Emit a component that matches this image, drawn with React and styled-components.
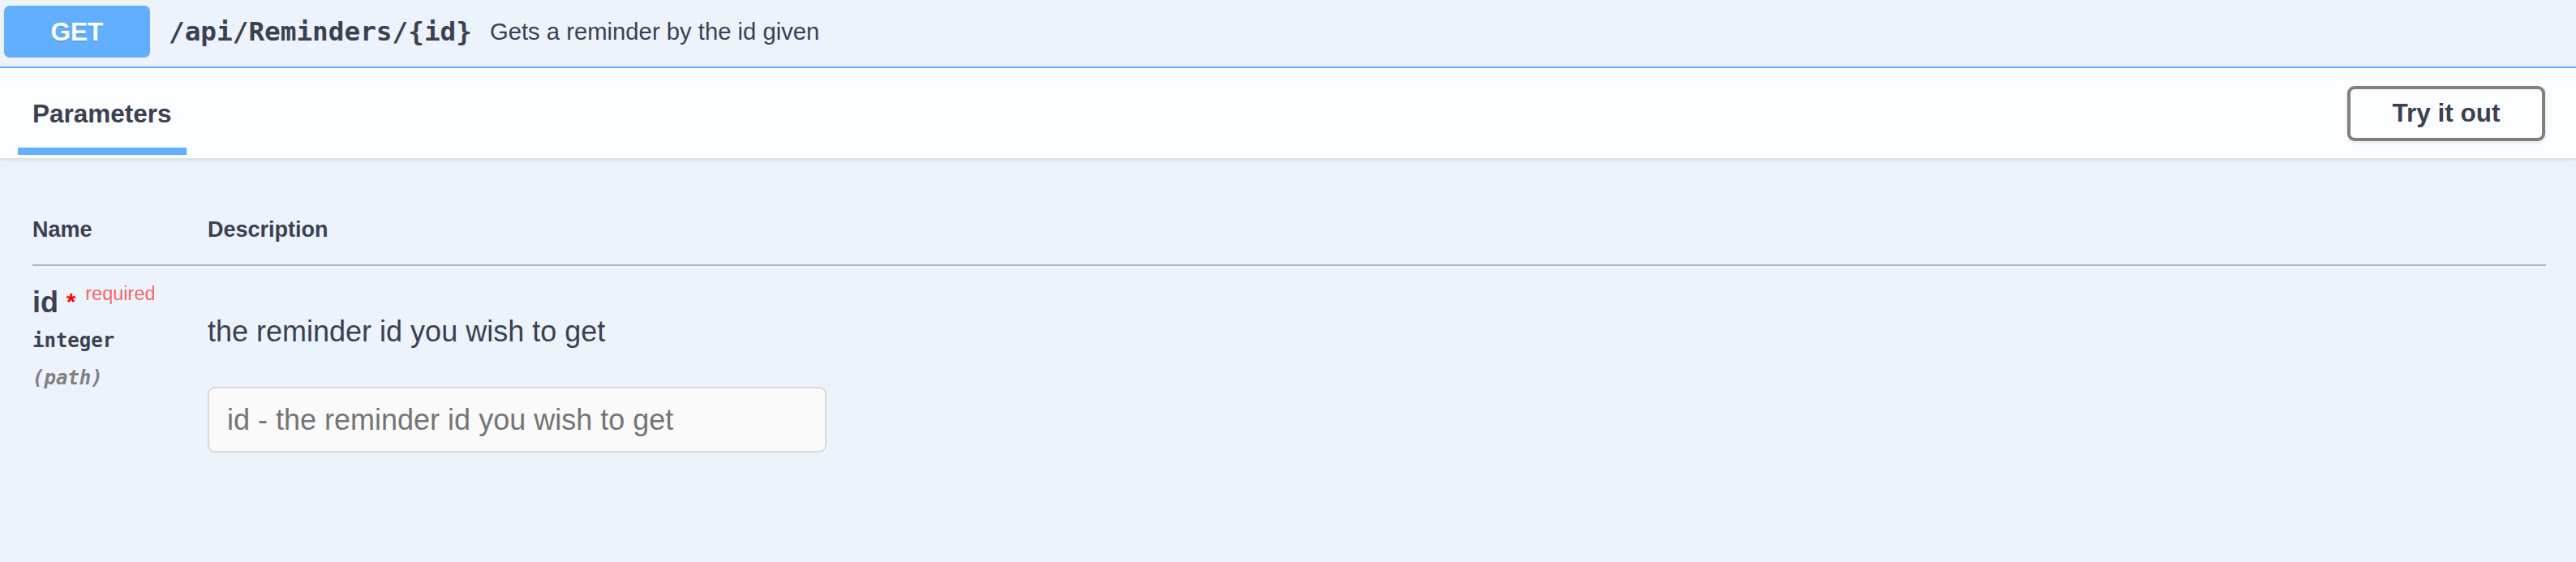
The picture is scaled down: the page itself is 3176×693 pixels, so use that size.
import React from "react";
import styled, { createGlobalStyle } from "styled-components";

const GlobalStyle = createGlobalStyle`
  html, body {
    margin: 0;
    padding: 0;
    background: #ecf3fb;
  }
  body {
    font-family: "Liberation Sans", Arial, sans-serif;
    color: #3b4151;
  }
`;

const Block = styled.div`
  min-height: 100vh;
  background: #ecf3fb;
  display: flex;
  flex-direction: column;
`;

const Summary = styled.div`
  display: flex;
  align-items: center;
  height: 84px;
  box-sizing: border-box;
  padding: 8px 5px 12px;
  border-bottom: 2px solid #61affe;
`;

const Method = styled.span`
  display: flex;
  align-items: center;
  justify-content: center;
  width: 180px;
  height: 64px;
  border-radius: 7px;
  background: #61affe;
  color: #fff;
  font-size: 31.5px;
  font-weight: 700;
  text-shadow: 0 2px 0 rgba(0, 0, 0, 0.1);
`;

const Path = styled.span`
  padding: 0 22px 0 23px;
  font-family: "DejaVu Sans Mono", "Liberation Mono", monospace;
  font-size: 32.7px;
  font-weight: 700;
  color: #3b4151;
`;

const SummaryDesc = styled.span`
  font-size: 29.25px;
  color: #3b4151;
`;

const SectionHeader = styled.div`
  display: flex;
  align-items: stretch;
  justify-content: space-between;
  height: 111px;
  box-sizing: border-box;
  padding: 0 38px 0 22px;
  background: rgba(255, 255, 255, 0.8);
  box-shadow: 0 2px 4px rgba(0, 0, 0, 0.1);
  position: relative;
`;

const Tab = styled.div`
  display: flex;
  flex-direction: column;
  justify-content: flex-end;
  padding-bottom: 4.5px;
`;

const TabLabel = styled.span`
  padding: 0 18px;
  font-size: 31.5px;
  line-height: 36px;
  font-weight: 700;
  color: #3b4151;
`;

const TabLine = styled.span`
  display: block;
  height: 9px;
  margin-top: 24px;
  background: ${(p) => p.$color};
`;

const TryButton = styled.button`
  align-self: center;
  width: 244px;
  height: 68px;
  border: 4px solid #808080;
  border-radius: 9px;
  background: transparent;
  box-shadow: 0 2px 4px rgba(0, 0, 0, 0.1);
  font-family: "Liberation Sans", Arial, sans-serif;
  font-size: 31.5px;
  font-weight: 700;
  color: #3b4151;
  cursor: pointer;
`;

const Body = styled.div`
  padding: 45.5px 37px 0 40px;
`;

const Table = styled.table`
  width: 100%;
  border-collapse: collapse;
  table-layout: fixed;
`;

const Th = styled.th`
  text-align: left;
  padding: 27px 0 27.5px;
  font-size: 27px;
  line-height: 31px;
  font-weight: 700;
  color: #3b4151;
  border-bottom: 2px solid rgba(59, 65, 81, 0.2);
`;

const Td = styled.td`
  vertical-align: top;
  padding: 24px 0 0;
`;

const ParamName = styled.div`
  font-size: 36px;
  line-height: 41px;
  font-weight: 700;
  color: #3b4151;
  white-space: nowrap;
`;

const Star = styled.span`
  margin-left: 10px;
  font-size: 29px;
  line-height: 20px;
  font-weight: 700;
  color: #ff0000;
  vertical-align: 3px;
`;

const Required = styled.span`
  margin-left: 12px;
  font-size: 23.5px;
  line-height: 20px;
  font-weight: 400;
  color: rgba(255, 0, 0, 0.6);
  vertical-align: 15px;
`;

const ParamType = styled.div`
  padding: 13px 0 11px;
  font-family: "DejaVu Sans Mono", "Liberation Mono", monospace;
  font-size: 24px;
  line-height: 28px;
  font-weight: 700;
  color: #3b4151;
`;

const ParamIn = styled.div`
  margin-top: 7px;
  font-family: "DejaVu Sans Mono", "Liberation Mono", monospace;
  font-size: 24px;
  line-height: 28px;
  font-weight: 700;
  font-style: italic;
  color: #808080;
`;

const DescText = styled.p`
  margin: 36px 0 0;
  font-size: 36px;
  line-height: 41px;
  color: #3b4151;
`;

const Input = styled.input`
  display: block;
  width: 763px;
  height: 81px;
  box-sizing: border-box;
  margin: 48px 0 11px;
  padding: 18px 22px;
  border: 2px solid #d9d9d9;
  border-radius: 9px;
  background: #fafafa;
  font-family: "Liberation Sans", Arial, sans-serif;
  font-size: 36px;
  color: #3b4151;
  outline: none;
  &::placeholder {
    color: #757575;
  }
`;

export default function App() {
  return (
    <>
      <GlobalStyle />
      <Block>
        <Summary>
          <Method>GET</Method>
          <Path>/api/Reminders/{"{id}"}</Path>
          <SummaryDesc>Gets a reminder by the id given</SummaryDesc>
        </Summary>
        <SectionHeader>
          <Tab>
            <TabLabel>Parameters</TabLabel>
            <TabLine $color="#61affe" />
          </Tab>
          <TryButton>Try it out</TryButton>
        </SectionHeader>
        <Body>
          <Table>
            <colgroup>
              <col style={{ width: 216 }} />
              <col />
            </colgroup>
            <thead>
              <tr>
                <Th>Name</Th>
                <Th>Description</Th>
              </tr>
            </thead>
            <tbody>
              <tr>
                <Td>
                  <ParamName>
                    id<Star>*</Star>
                    <Required>required</Required>
                  </ParamName>
                  <ParamType>integer</ParamType>
                  <ParamIn>(path)</ParamIn>
                </Td>
                <Td>
                  <DescText>the reminder id you wish to get</DescText>
                  <Input type="text" placeholder="id - the reminder id you wish to get" />
                </Td>
              </tr>
            </tbody>
          </Table>
        </Body>
      </Block>
    </>
  );
}
